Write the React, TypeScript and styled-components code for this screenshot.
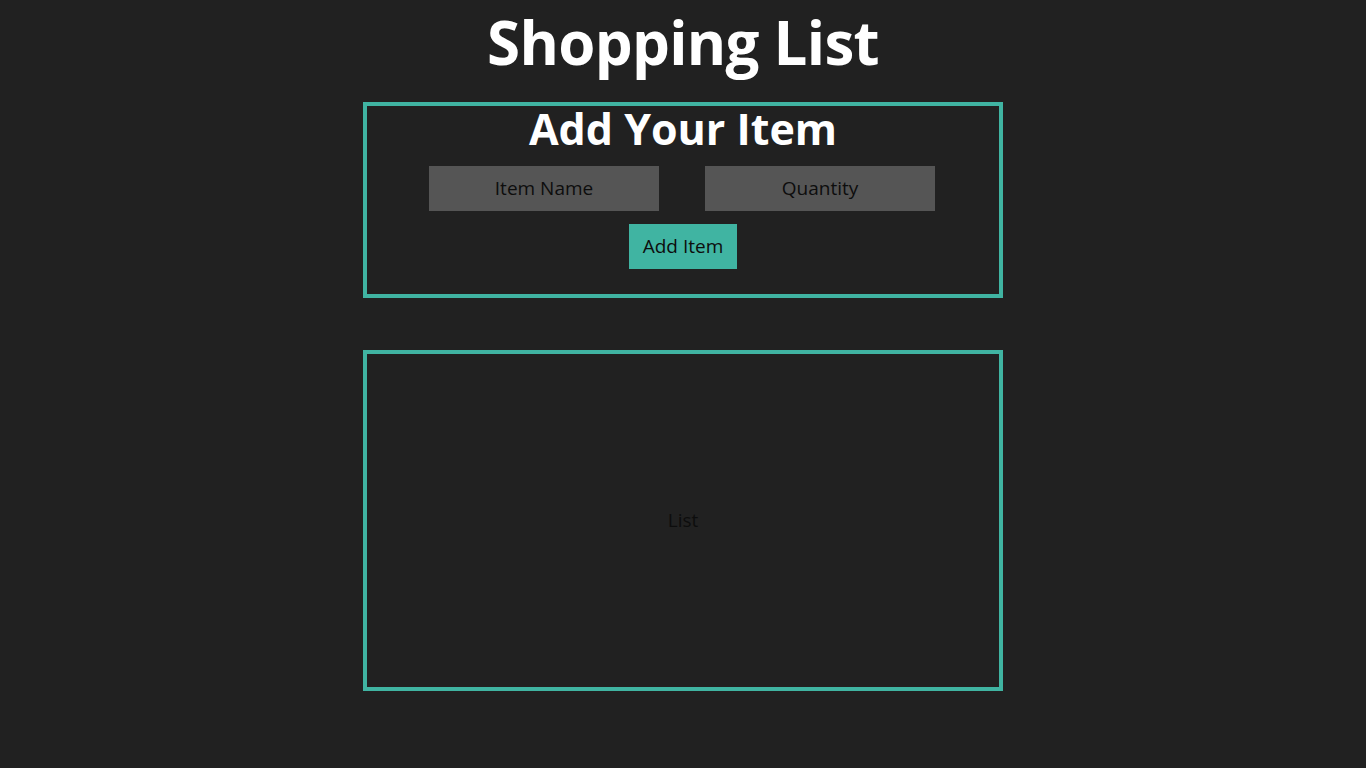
import React from "react";
import styled, { createGlobalStyle } from "styled-components";

const Global = createGlobalStyle`
  html, body { margin: 0; padding: 0; background: #212121; }
  body { font-family: "Open Sans", "Noto Sans", sans-serif; }
  * { box-sizing: border-box; }
`;

const Page = styled.main`
  min-height: 768px;
  display: flex;
  flex-direction: column;
  align-items: center;
  padding-top: 3px;
`;

const Title = styled.h1`
  margin: 0;
  height: 99px;
  font-family: "Open Sans", sans-serif;
  font-weight: 700;
  font-size: 60px;
  line-height: 78px;
  color: #ffffff;
  letter-spacing: -0.7px;
`;

const Panel = styled.section<{ $height: number }>`
  width: 640px;
  height: ${(p) => p.$height}px;
  border: 4px solid #40b4a2;
  display: flex;
  flex-direction: column;
  align-items: center;
`;

const Form = styled(Panel)``;

const List = styled(Panel)`
  margin-top: 52px;
  justify-content: center;
  padding-bottom: 2px;
`;

const SubTitle = styled.h2`
  margin: 0;
  height: 60px;
  font-family: "Open Sans", sans-serif;
  font-weight: 700;
  font-size: 43px;
  line-height: 46px;
  color: #ffffff;
  letter-spacing: 0;
`;

const Row = styled.div`
  display: flex;
  gap: 46px;
  margin-right: 2px;
`;

const Field = styled.div`
  width: 230px;
  height: 45px;
  background: #555555;
  display: flex;
  align-items: center;
  justify-content: center;
  padding-bottom: 2px;
  font-size: 19px;
  color: #0d0d0d;
`;

const Button = styled.button`
  margin-top: 13px;
  width: 108px;
  height: 45px;
  border: none;
  background: #40b4a2;
  font-family: "Open Sans", sans-serif;
  font-size: 19px;
  color: #0d0d0d;
  padding: 0 0 2px;
`;

const ListText = styled.span`
  font-size: 19px;
  color: #0d0d0d;
`;

export default function App() {
  return (
    <>
      <Global />
      <Page>
        <Title>Shopping List</Title>
        <Form $height={196}>
          <SubTitle>Add Your Item</SubTitle>
          <Row>
            <Field>Item Name</Field>
            <Field>Quantity</Field>
          </Row>
          <Button>Add Item</Button>
        </Form>
        <List $height={341}>
          <ListText>List</ListText>
        </List>
      </Page>
    </>
  );
}
